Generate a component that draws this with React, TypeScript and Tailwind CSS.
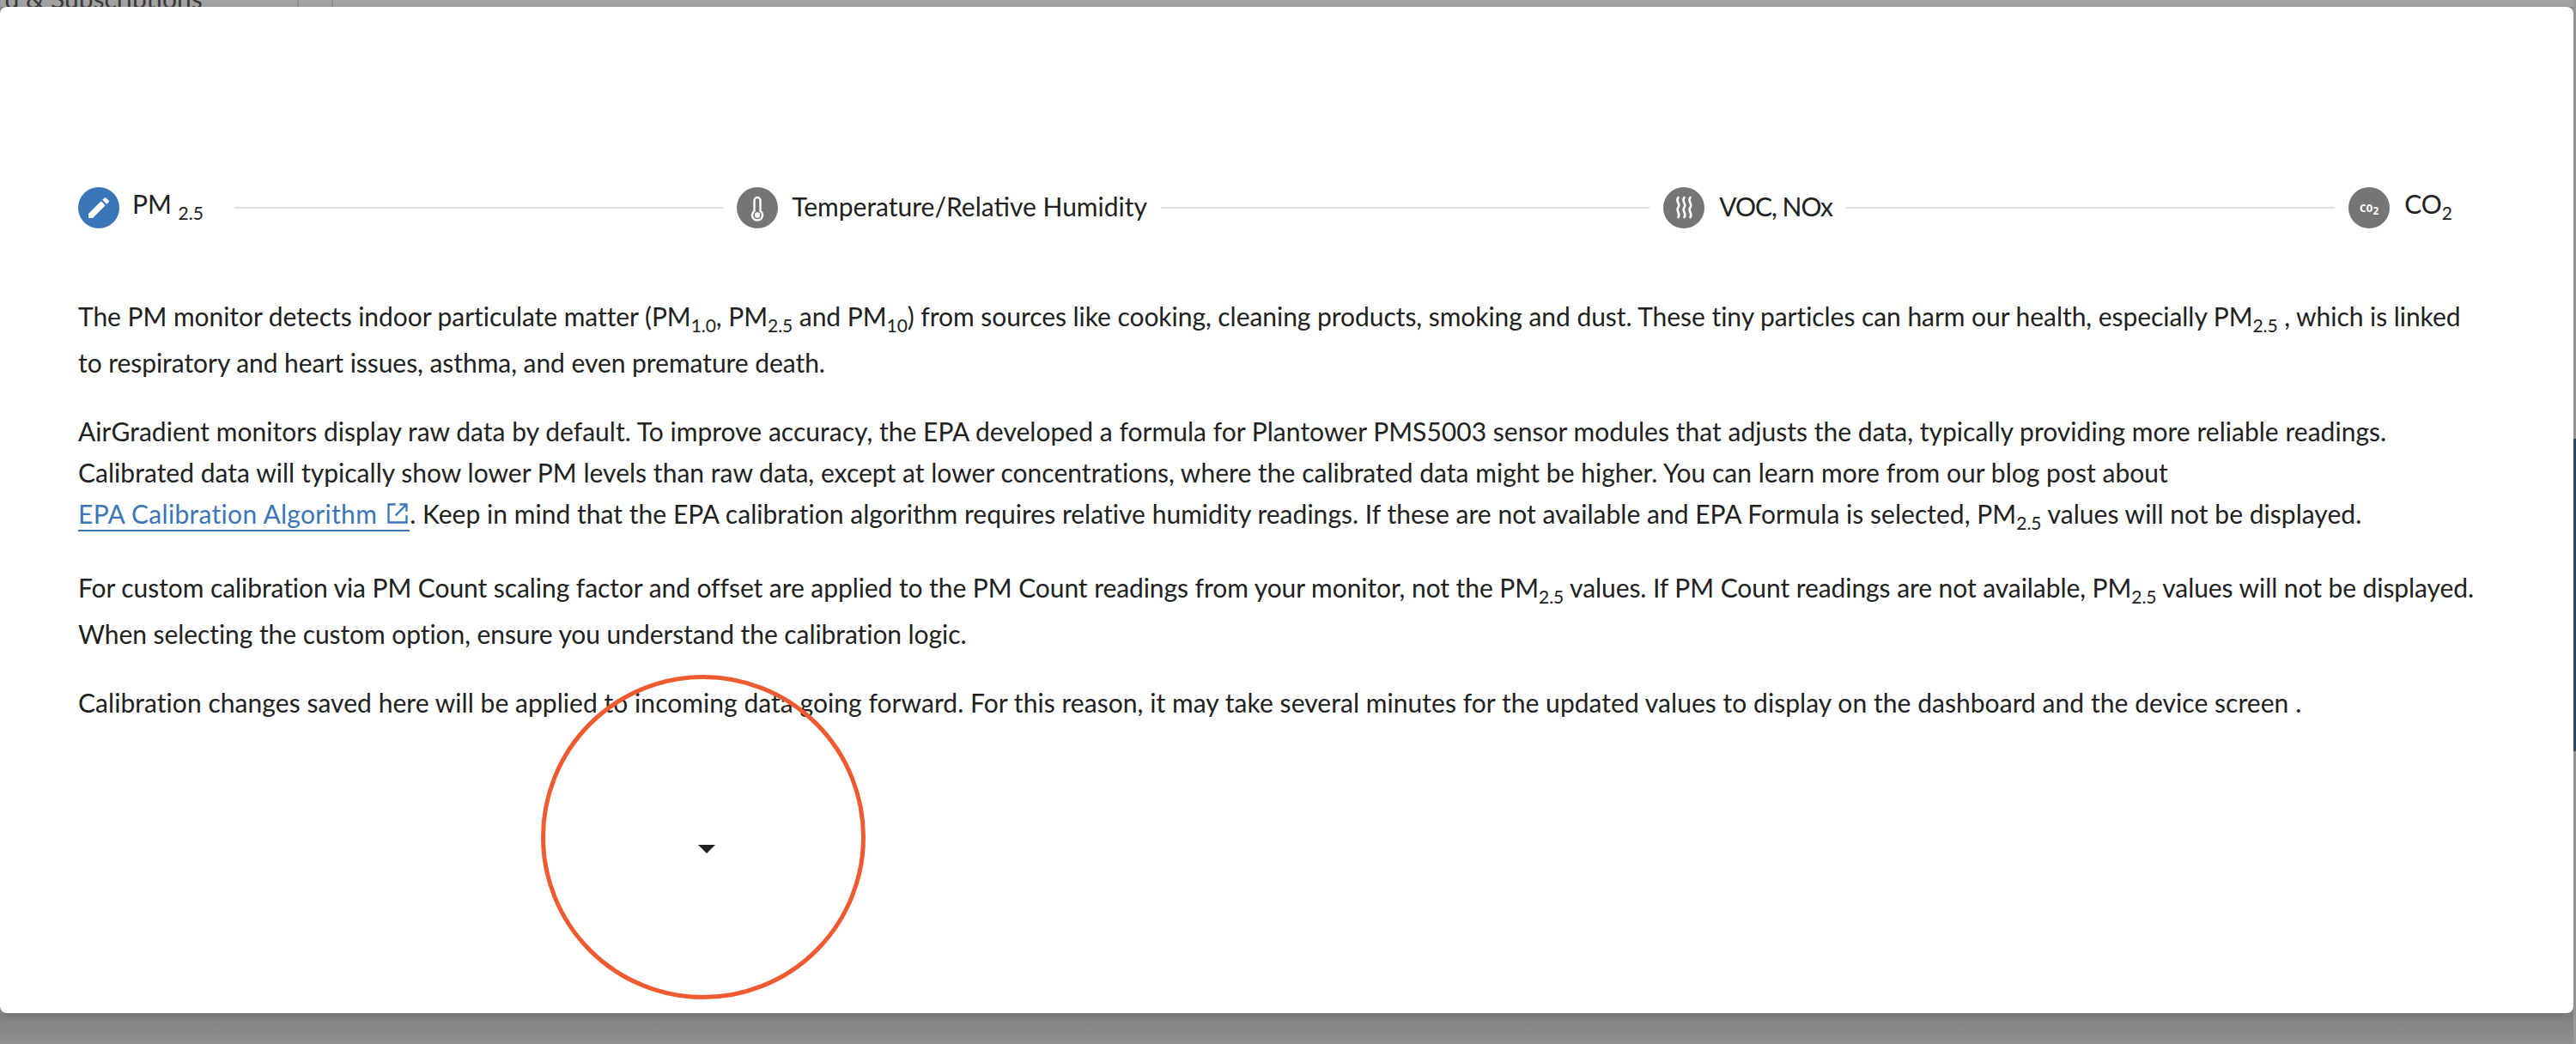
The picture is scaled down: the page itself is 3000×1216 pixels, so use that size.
const F = "font-['Lato','Liberation_Sans',sans-serif]";

function Sub({ children }: { children: React.ReactNode }) {
  return <sub className="static align-[-7px] text-[21px] leading-[38px]">{children}</sub>;
}

function Circle({ active, children }: { active?: boolean; children: React.ReactNode }) {
  return (
    <span className={`flex h-[48px] w-[48px] shrink-0 items-center justify-center rounded-full ${active ? 'bg-[#3a75b8]' : 'bg-[#757575]'}`}>
      {children}
    </span>
  );
}

function Line() {
  return <span className="mx-[16px] h-[2px] flex-1 bg-[#e0e0e0]" />;
}

export default function App() {
  return (
    <div className={`flex h-[1216px] w-[3000px] overflow-hidden bg-[#8c8c8c] ${F} text-[#212121]`}>
      <div className="flex w-[2997px] flex-col">
        <div className="relative h-[8px] shrink-0 overflow-hidden bg-[#a3a3a3]">
          <span className="absolute left-[-56px] top-[-24px] whitespace-nowrap text-[30px] text-[#3a3a3a]">Board &amp; Subscriptions</span>
          <span className="absolute left-[346px] top-0 h-[8px] w-[2px] bg-[#8f8f8f]" />
          <span className="absolute left-[386px] top-0 h-[8px] w-[2px] bg-[#8f8f8f]" />
        </div>
        <div className="relative flex h-[1172px] w-[2997px] flex-col rounded-[8px] bg-white pl-[91px] pr-[97px] pt-[210px] shadow-[0_2px_8px_rgba(0,0,0,0.12)]">
          <div className="flex h-[48px] w-[2765px] items-center text-[30px]">
            <Circle active>
              <svg viewBox="0 0 24 24" className="h-[32px] w-[32px] fill-white">
                <path d="M3 17.25V21h3.75L17.81 9.94l-3.75-3.75L3 17.25zM20.71 7.04c.39-.39.39-1.02 0-1.41l-2.34-2.34c-.39-.39-1.02-.39-1.41 0l-1.83 1.83 3.75 3.75 1.83-1.83z" />
              </svg>
            </Circle>
            <span className="ml-[15px] whitespace-nowrap pb-[3px] pr-[20px] leading-[46px]">PM <Sub>2.5</Sub></span>
            <Line />
            <Circle>
              <svg viewBox="0 0 48 48" className="h-[48px] w-[48px]">
                <path d="M24 12a3.5 3.5 0 0 1 3.5 3.5v12.2a6 6 0 1 1-7 0V15.500a3.500 3.500 0 0 1 3.500-3.500z" fill="none" stroke="#fff" strokeWidth="2.400" />
                <circle cx="24" cy="32.500" r="3.200" fill="#fff" />
              </svg>
            </Circle>
            <span className="ml-[16px] whitespace-nowrap pb-[3px]">Temperature/Relative Humidity</span>
            <Line />
            <Circle>
              <svg viewBox="0 0 48 48" className="h-[48px] w-[48px] fill-none stroke-white" strokeWidth="2.600" strokeLinecap="round">
                <path d="M17.500 12c-4 5 3.500 7 0 11.500s3.500 7 0 11.500" />
                <path d="M24.500 12c-4 5 3.500 7 0 11.500s3.500 7 0 11.500" />
                <path d="M31.500 12c-4 5 3.500 7 0 11.500s3.500 7 0 11.500" />
              </svg>
            </Circle>
            <span className="ml-[17px] whitespace-nowrap pb-[3px] tracking-[-1px]">VOC, NOx</span>
            <Line />
            <Circle>
              <span className="whitespace-nowrap font-['DejaVu_Sans_Mono',monospace] text-[13px] font-bold leading-none text-white">CO<span className="relative top-[3px] text-[12px]">2</span></span>
            </Circle>
            <span className="ml-[17px] whitespace-nowrap pb-[3px] leading-[46px]">CO<Sub>2</Sub></span>
          </div>

          <div className="mt-[78px] flex flex-col gap-[32px] text-[30px] leading-[48px]">
            <p className="tracking-[-0.05px]">
              The PM monitor detects indoor particulate matter (PM<Sub>1.0</Sub>, PM<Sub>2.5</Sub> and PM<Sub>10</Sub>) from sources like cooking, cleaning products, smoking and dust. These tiny particles can harm our health, especially PM<Sub>2.5</Sub> , which is linked to respiratory and heart issues, asthma, and even premature death.
            </p>
            <p className="tracking-[0.03px]">
              AirGradient monitors display raw data by default. To improve accuracy, the EPA developed a formula for Plantower PMS5003 sensor modules that adjusts the data, typically providing more reliable readings. Calibrated data will typically show lower PM levels than raw data, except at lower concentrations, where the calibrated data might be higher. You can learn more from our blog post about{' '}
              <a className="inline-flex items-center gap-[10px] border-b-2 border-[#3a75b8] leading-[38px] tracking-[0.3px] text-[#3a75b8]">
                EPA Calibration Algorithm
                <svg viewBox="0 0 24 24" className="h-[28px] w-[28px] fill-none stroke-[#3a75b8]" strokeWidth="2">
                  <path d="M10 3H3v18h18v-7M14 3h7v7M21 3 10 14" />
                </svg>
              </a>
              . Keep in mind that the EPA calibration algorithm requires relative humidity readings. If these are not available and EPA Formula is selected, PM<Sub>2.5</Sub> values will not be displayed.
            </p>
            <p className="tracking-[-0.07px]">
              For custom calibration via PM Count scaling factor and offset are applied to the PM Count readings from your monitor, not the PM<Sub>2.5</Sub> values. If PM Count readings are not available, PM<Sub>2.5</Sub> values will not be displayed. When selecting the custom option, ensure you understand the calibration logic.
            </p>
            <p className="tracking-[0.05px]">
              Calibration changes saved here will be applied to incoming data going forward. For this reason, it may take several minutes for the updated values to display on the dashboard and the device screen .
            </p>
          </div>

          <div className="ml-[722px] mt-[142px] h-0 w-0 border-x-[10px] border-t-[10px] border-x-transparent border-t-[#212121]" />

          <div className="absolute left-[630px] top-[778px] h-[378px] w-[378px] rounded-full border-[5px] border-[#ef5a30]" />
        </div>
        <div className="flex-1 bg-gradient-to-b from-[#808080] to-[#8f8f8f]" />
      </div>
      <div className="flex w-[3px] flex-col bg-[#9a9a9a]">
        <div className="mt-[511px] h-[364px] bg-[#264a70]" />
      </div>
    </div>
  );
}
